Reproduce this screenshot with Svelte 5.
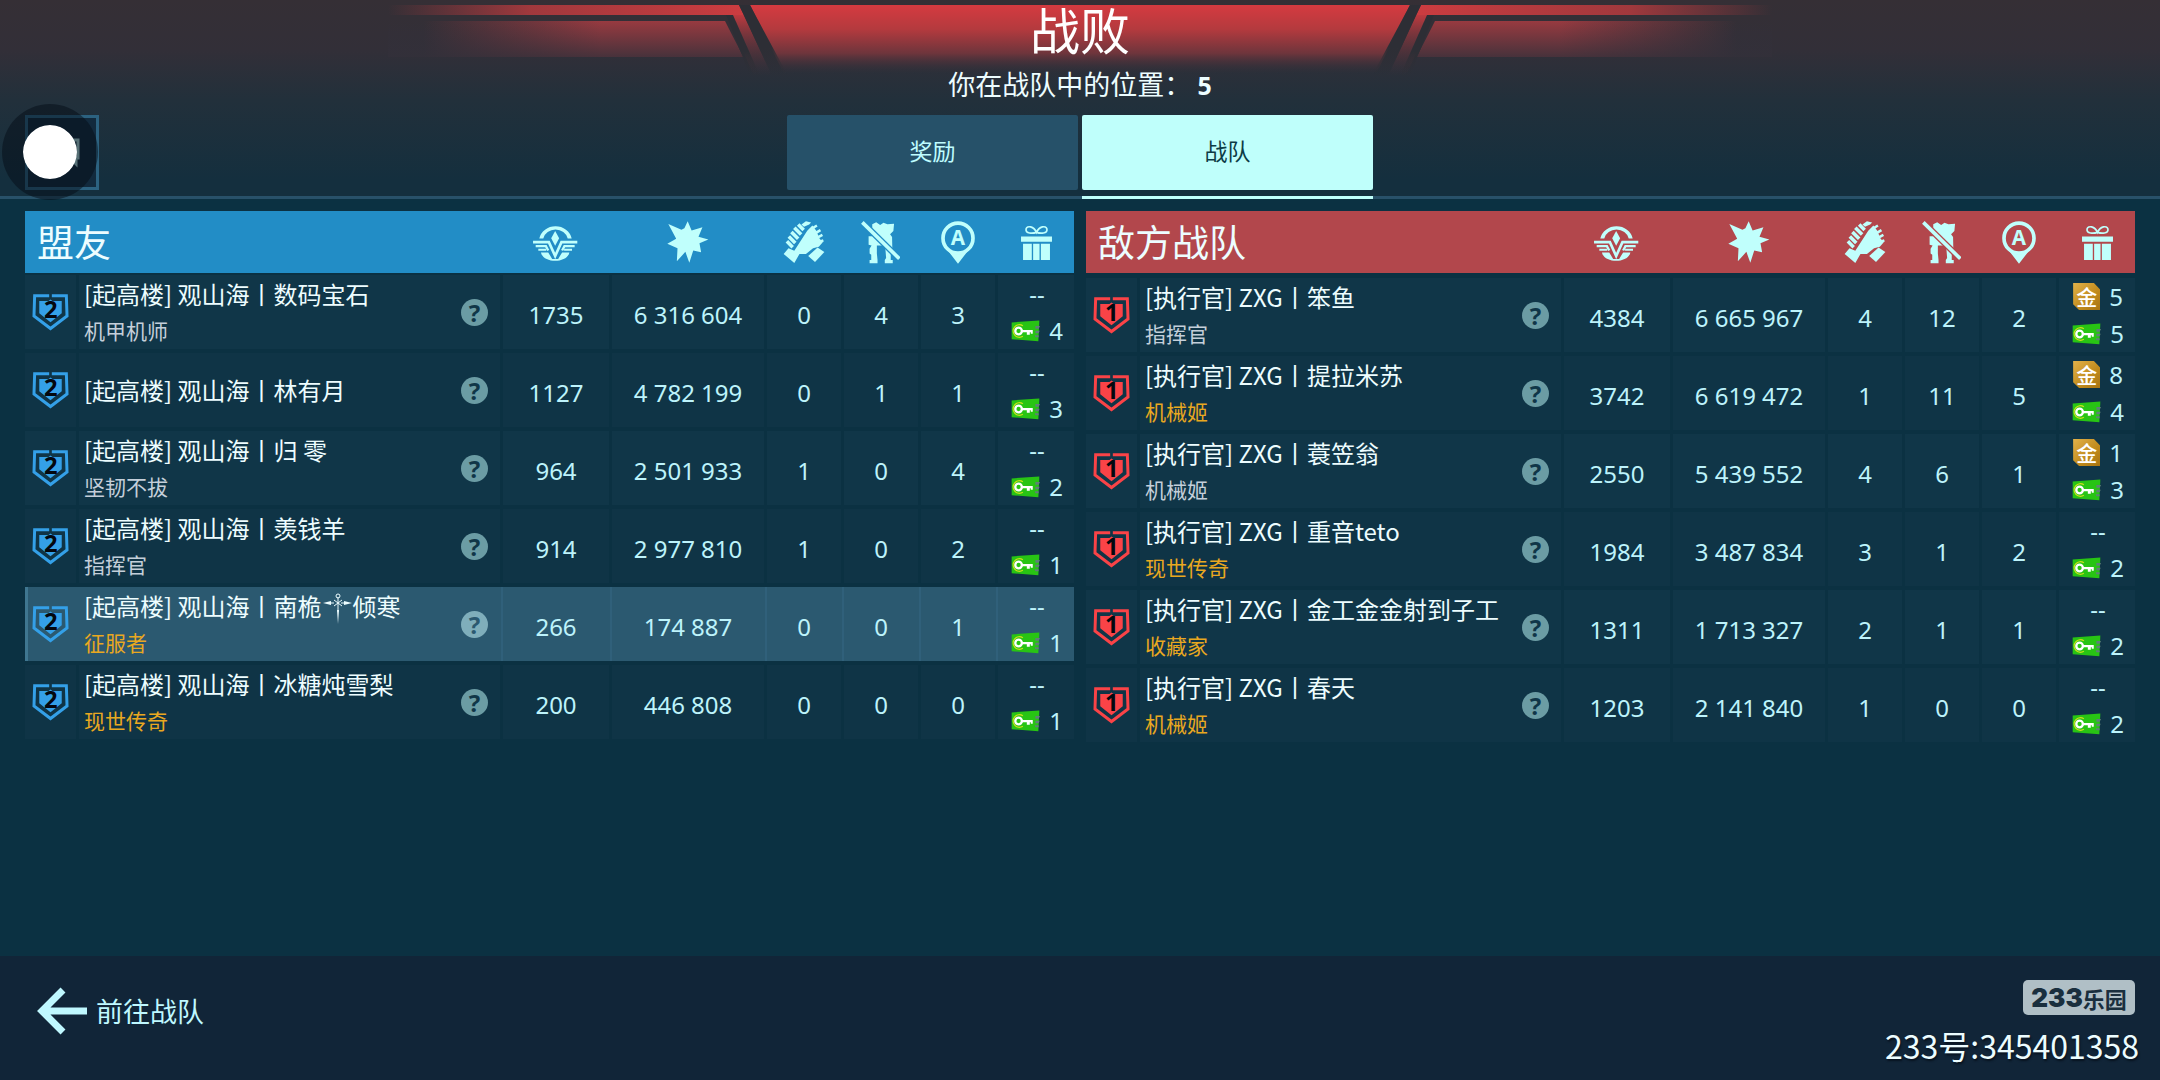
<script>
	let activeTab = 'team';

	const tabs = [
		{ id: 'rewards', label: '奖励' },
		{ id: 'team', label: '战队' }
	];

	const columns = ['rank', 'damage', 'assists', 'mechs', 'beacons', 'rewards'];
	const columnNames = {
		rank: '荣誉',
		damage: '伤害',
		assists: '助攻',
		mechs: '击毁',
		beacons: '信标',
		rewards: '奖励'
	};

	// stats: honor, damage, assists, kills, beacons
	const teams = [
		{
			id: 'ally',
			title: '盟友',
			level: 2,
			players: [
				{ name: '[起高楼] 观山海丨数码宝石', title: '机甲机师', stats: ['1735', '6 316 604', 0, 4, 3], keys: 4 },
				{ name: '[起高楼] 观山海丨林有月', stats: ['1127', '4 782 199', 0, 1, 1], keys: 3 },
				{ name: '[起高楼] 观山海丨归 零', title: '坚韧不拔', stats: ['964', '2 501 933', 1, 0, 4], keys: 2 },
				{ name: '[起高楼] 观山海丨羡钱羊', title: '指挥官', stats: ['914', '2 977 810', 1, 0, 2], keys: 1 },
				{ name: '[起高楼] 观山海丨南桅༒倾寒', title: '征服者', rare: true, me: true, stats: ['266', '174 887', 0, 0, 1], keys: 1 },
				{ name: '[起高楼] 观山海丨冰糖炖雪梨', title: '现世传奇', rare: true, stats: ['200', '446 808', 0, 0, 0], keys: 1 }
			]
		},
		{
			id: 'enemy',
			title: '敌方战队',
			level: 1,
			players: [
				{ name: '[执行官] ZXG丨笨鱼', title: '指挥官', stats: ['4384', '6 665 967', 4, 12, 2], gold: 5, keys: 5 },
				{ name: '[执行官] ZXG丨提拉米苏', title: '机械姬', rare: true, stats: ['3742', '6 619 472', 1, 11, 5], gold: 8, keys: 4 },
				{ name: '[执行官] ZXG丨蓑笠翁', title: '机械姬', stats: ['2550', '5 439 552', 4, 6, 1], gold: 1, keys: 3 },
				{ name: '[执行官] ZXG丨重音teto', title: '现世传奇', rare: true, stats: ['1984', '3 487 834', 3, 1, 2], keys: 2 },
				{ name: '[执行官] ZXG丨金工金金射到子工', title: '收藏家', rare: true, stats: ['1311', '1 713 327', 2, 1, 1], keys: 2 },
				{ name: '[执行官] ZXG丨春天', title: '机械姬', rare: true, stats: ['1203', '2 141 840', 1, 0, 0], keys: 2 }
			]
		}
	];
</script>

{#snippet columnIcon(kind)}
	{#if kind === 'rank'}
		<svg class="icon" viewBox="0 0 136 112" width="45" height="37" aria-hidden="true">
			<path d="M19 44A50 46 0 0 1 117 44H105A38 35 0 0 0 31 44Z" />
			<path d="M67 21L79 43L67 66L55 43Z" />
			<path class="line" d="M0 55H48L67 97L86 55H134" stroke-width="8" />
			<path class="line" d="M8 67H39L46 80M126 67H95L88 80" stroke-width="7" />
			<path class="line" d="M16 78H40M118 78H94" stroke-width="6" />
			<path d="M24 86H46L58 106H76L88 86H110C104 120 30 120 24 86Z" />
		</svg>
	{:else if kind === 'damage'}
		<svg class="icon" viewBox="0 0 126 128" width="42" height="42" aria-hidden="true">
			<path d="M3 9L43 27L52 22L62 1L74 29L107 19L95 48L125 56L98 68L103 95L79 90L67 127L55 94L29 123L31 83L0 69L27 54Z" />
		</svg>
	{:else if kind === 'assists'}
		<svg class="icon" viewBox="0 0 128 130" width="42" height="42" aria-hidden="true">
			<path class="line" d="M46 11L63 28M34 21L55 42M25 34L46 55M17 48L37 68M11 63L29 81" stroke-width="11" />
			<path d="M56 11L70 1L86 5L80 11L64 18Z" />
			<path d="M74 30L90 14L102 30L112 54L122 66L110 80L92 84L70 102L50 102L34 130L1 102L16 84L34 92Z" />
			<path class="line" d="M88 24L104 14M98 38L115 28M104 52L121 43M108 66L124 60" stroke-width="8" />
			<path d="M77 108L106 82L127 96L98 127Z" />
		</svg>
	{:else if kind === 'mechs'}
		<svg class="icon" viewBox="0 0 118 130" width="39" height="43" aria-hidden="true">
			<path d="M34 10L46 4L58 12L68 5L80 10L100 8L98 30L88 40L94 48L95 96L90 100V118H96V128H72V118L76 112L73 74H48V98L50 118V128H26V118H31V102L26 98V84L32 74L23 72V46H34Z" />
			<path class="gap" d="M4 4L116 114" />
			<path class="line" d="M4 4L116 114" stroke-width="11" />
		</svg>
	{:else if kind === 'beacons'}
		<svg class="icon" viewBox="0 0 102 128" width="34" height="43" aria-hidden="true">
			<circle class="line" cx="51" cy="51" r="45" stroke-width="11" />
			<path d="M22 90Q51 108 80 90L51 128Z" />
			<text x="51" y="73" text-anchor="middle">A</text>
		</svg>
	{:else}
		<svg class="icon" viewBox="0 0 92 104" width="31" height="35" aria-hidden="true">
			<path class="line" d="M46 22C38 4 18 0 15 12C13 26 34 26 46 22C58 26 79 26 77 12C74 0 54 4 46 22Z" stroke-width="5" />
			<path d="M0 34H92V50H0ZM6 56H32V104H6ZM36 56H55V104H36ZM59 56H86V104H59Z" />
		</svg>
	{/if}
{/snippet}

{#snippet badge(level)}
	<svg class="badge" viewBox="0 0 112 114" width="37" height="38" role="img" aria-label="等级 {level}">
		<path class="line" d="M52 8H8L6 69L56 107L106 69L104 8H60" stroke-width="9" />
		<path d="M22 24H50L56 19L62 24H90V61L56 88L22 61Z" />
		<text x="57" y="75" text-anchor="middle">{level}</text>
	</svg>
{/snippet}

{#snippet keyCard()}
	<svg class="key" viewBox="0 0 88 66" width="29" height="22" aria-hidden="true">
		<path d="M2 7L86 1L83 64L2 58Z" fill="#28c414" />
		<path d="M74 18H88L84 26H74ZM74 32H87L84 40H74ZM72 46H84V52H74Z" fill="#5f7f78" />
		<path d="M36 17A19 19 0 1 0 36 49" fill="none" stroke="#c8de1e" stroke-width="4" />
		<circle cx="23" cy="33" r="10" fill="none" stroke="#fff" stroke-width="7" />
		<path d="M32 30H66V41H60V37H57V44H48V37H32Z" fill="#fff" />
	</svg>
{/snippet}

<div class="page">
	<header>
		<svg class="banner" viewBox="0 0 1384 80" width="1384" height="80" aria-hidden="true">
			<defs>
				<linearGradient id="center" x1="0" y1="0" x2="0" y2="1">
					<stop offset="0" stop-color="#d53a40" />
					<stop offset="0.35" stop-color="#b43a3e" />
					<stop offset="0.7" stop-color="#6e353c" />
					<stop offset="1" stop-color="#33303a" stop-opacity="0" />
				</linearGradient>
				<linearGradient id="strip" x1="0" y1="0" x2="1" y2="0">
					<stop offset="0" stop-color="#b43a3e" stop-opacity="0" />
					<stop offset="0.4" stop-color="#b43a3e" stop-opacity="0.85" />
					<stop offset="1" stop-color="#cc3c40" />
				</linearGradient>
				<linearGradient id="slash" x1="0" y1="0" x2="0" y2="1">
					<stop offset="0" stop-color="#bd3a3f" />
					<stop offset="1" stop-color="#4a333c" stop-opacity="0" />
				</linearGradient>
				<linearGradient id="panel" x1="0" y1="0" x2="1" y2="0">
					<stop offset="0.1" stop-color="#983a40" stop-opacity="0" />
					<stop offset="0.6" stop-color="#983a40" />
				</linearGradient>
				<linearGradient id="shade" x1="0" y1="0" x2="0" y2="1">
					<stop offset="0" stop-color="#33303a" stop-opacity="0" />
					<stop offset="1" stop-color="#33303a" stop-opacity="0.8" />
				</linearGradient>
				<linearGradient id="edge" x1="0" y1="0" x2="0" y2="1">
					<stop offset="0.6" stop-color="#2d2e35" />
					<stop offset="1" stop-color="#2d2e35" stop-opacity="0" />
				</linearGradient>
				<g id="wing">
					<path d="M0 5H351L356 15H0Z" fill="url(#strip)" />
					<path d="M339 15H356L384 76H366Z" fill="url(#slash)" />
					<path d="M0 21H337L355 57H0Z" fill="url(#panel)" />
					<path d="M0 21H337L355 57H0Z" fill="url(#shade)" />
					<path d="M338 15H345L372 76H362Z" fill="url(#edge)" />
					<path d="M351 5H362L400 76H384Z" fill="url(#edge)" />
				</g>
			</defs>
			<path d="M362 5H1022L988 74H396Z" fill="url(#center)" />
			<use href="#wing" />
			<use href="#wing" transform="translate(1384 0) scale(-1 1)" />
		</svg>
		<h1>战败</h1>
		<p class="position">你在战队中的位置： <b>5</b></p>
		<div class="toolbar">
			<button class="chat" aria-label="聊天">
				<svg viewBox="0 0 36 30" width="36" height="30" aria-hidden="true">
					<path d="M2 2H34V20H32V26L26 20H2Z" />
				</svg>
				<span class="touch"></span>
			</button>
			<nav>
				{#each tabs as tab}
					<button class="tab" class:active={activeTab === tab.id} onclick={() => (activeTab = tab.id)}>
						{tab.label}
					</button>
				{/each}
			</nav>
		</div>
	</header>

	<main>
		{#each teams as team}
			<table class={team.id}>
				<colgroup>
					<col class="c-level" />
					<col />
					<col class="c-rank" />
					<col class="c-damage" />
					<col class="c-small" />
					<col class="c-small" />
					<col class="c-small" />
					<col class="c-reward" />
				</colgroup>
				<thead>
					<tr>
						<th colspan="2" class="team-name">{team.title}</th>
						{#each columns as column}
							<th aria-label={columnNames[column]}>{@render columnIcon(column)}</th>
						{/each}
					</tr>
				</thead>
				<tbody>
					{#each team.players as player}
						<tr class:me={player.me}>
							<td>{@render badge(team.level)}</td>
							<td>
								<div class="player">
									<div class="names">
										<div class="name">
											{#each player.name.split('༒') as part, i}
												{#if i > 0}
													<svg class="ornament" viewBox="0 0 31 32" width="31" height="32" role="img" aria-label="༒">
														<path d="M1 11L9 9V13ZM30 11L22 9V13ZM15 18H17L16 32Z" />
														<path class="line" d="M8 11H12M19 11H23M16 5V20M12 8L20 14M20 8L12 14" stroke-width="1" />
														<circle class="line" cx="16" cy="4" r="2" stroke-width="1" />
													</svg>
												{/if}{part}
											{/each}
										</div>
										{#if player.title}
											<div class="title" class:rare={player.rare}>{player.title}</div>
										{/if}
									</div>
									<button class="help" aria-label="玩家信息">?</button>
								</div>
							</td>
							{#each player.stats as stat}
								<td class="stat">{stat}</td>
							{/each}
							<td class="reward">
								{#if player.gold}
									<div><span class="gold">金</span><span class="count">{player.gold}</span></div>
								{:else}
									<div class="none">--</div>
								{/if}
								<div>{@render keyCard()}<span class="count">{player.keys}</span></div>
							</td>
						</tr>
					{/each}
				</tbody>
			</table>
		{/each}
	</main>

	<footer>
		<a class="back" href="#team">
			<svg viewBox="0 0 50 48" width="50" height="48" aria-hidden="true">
				<path d="M26 3L5 24L26 45M5 24H50" />
			</svg>
			前往战队
		</a>
		<div class="account">
			<div class="brand"><b>233</b>乐园</div>
			<div class="uid">233号:345401358</div>
		</div>
	</footer>
</div>

<style>
	:global(body) {
		margin: 0;
		background: #0b3142;
	}

	.page {
		display: flex;
		flex-direction: column;
		min-height: 100vh;
		font-family: 'Noto Sans CJK SC', sans-serif;
		color: #edfdff;
		background: #0b3142;
	}

	button {
		font-family: inherit;
		border: 0;
		padding: 0;
		cursor: pointer;
	}

	header {
		position: relative;
		border-bottom: 3px solid #285169;
		background: linear-gradient(#352f35 0, #322f38 50px, #22303b 100px, #142f3e 180px);
		text-align: center;
	}

	.banner {
		position: absolute;
		top: 0;
		left: 50%;
		transform: translateX(-50%);
	}

	h1 {
		position: relative;
		margin: 0 0 6px;
		font-size: 50px;
		font-weight: 400;
		line-height: 56px;
		color: #fff;
	}

	.position {
		position: relative;
		margin: 0;
		font-size: 27px;
		line-height: 44px;
	}

	.position b {
		font-family: 'Noto Sans', sans-serif;
		font-size: 25px;
		line-height: 1;
	}

	.toolbar {
		display: grid;
		grid-template-columns: 1fr auto 1fr;
		padding: 9px 25px 6px;
	}

	.chat {
		position: relative;
		display: grid;
		place-items: center;
		width: 74px;
		height: 75px;
		border: 3px solid #2c6280;
		background: #122a3d;
	}

	.chat path {
		fill: none;
		stroke: #a9d2d4;
		stroke-width: 3;
	}

	/* touch indicator lies over the chat button */
	.touch {
		position: absolute;
		top: -14px;
		left: -26px;
		box-sizing: border-box;
		width: 96px;
		height: 96px;
		border: 21px solid rgba(4, 12, 22, 0.5);
		border-radius: 50%;
		background: #fff;
		background-clip: padding-box;
	}

	nav {
		display: flex;
		gap: 4px;
	}

	.tab {
		position: relative;
		width: 291px;
		height: 75px;
		padding-bottom: 6px;
		border-radius: 2px;
		font-size: 23px;
		color: #bffcff;
		background: #265169;
	}

	.tab.active {
		color: #0d3b45;
		background: #bffffb;
	}

	.tab.active::after {
		content: '';
		position: absolute;
		left: 0;
		right: 0;
		bottom: -9px;
		height: 3px;
		background: #bffffb;
	}

	main {
		flex: 1;
		display: grid;
		grid-template-columns: 1fr 1fr;
		align-items: start;
		gap: 12px;
		padding: 12px 25px;
	}

	table {
		width: 100%;
		table-layout: fixed;
		border-collapse: separate;
		border-spacing: 0;
	}

	.ally {
		--team: #228dc6;
		--badge: #34a0e8;
		--head-gap: 2px;
	}

	.enemy {
		--team: #b2474c;
		--badge: #fa4347;
		--head-gap: 5px;
	}

	.c-level {
		width: 54px;
	}

	.c-rank {
		width: 109px;
	}

	.c-damage {
		width: 155px;
	}

	.c-small {
		width: 77px;
	}

	.c-reward {
		width: 76px;
	}

	th,
	td {
		box-sizing: border-box;
		padding: 0;
		background-clip: padding-box;
	}

	th {
		height: 64px;
		padding-right: 4px;
		border-bottom: var(--head-gap) solid transparent;
		background-color: var(--team);
		vertical-align: middle;
	}

	th:last-child {
		padding-right: 0;
	}

	.enemy th {
		height: 67px;
	}

	.team-name {
		padding: 0 0 3px 12px;
		font-size: 37px;
		font-weight: 400;
		line-height: 56px;
		text-align: left;
	}

	svg {
		display: block;
	}

	.icon {
		margin: 0 auto;
		fill: #c0fffc;
		stroke: none;
	}

	.icon .line {
		fill: none;
		stroke: #c0fffc;
	}

	.icon .gap {
		stroke: var(--team);
		stroke-width: 19;
	}

	.icon text {
		font: 700 62px 'Noto Sans', sans-serif;
	}

	td {
		height: 78px;
		border-right: 3px solid transparent;
		border-bottom: 4px solid transparent;
		background-color: #103648;
	}

	tr:nth-child(even) td {
		background-color: #0f3446;
	}

	td:last-child {
		border-right: 0;
	}

	tr.me td {
		padding-right: 3px;
		border-right: 0;
		background-color: #2b5970;
		box-shadow: inset -2px 0 #30607a;
	}

	tr.me td:first-child {
		box-shadow: inset 3px 0 #3f7690;
	}

	tr.me td:last-child {
		padding-right: 0;
		box-shadow: none;
	}

	.badge {
		margin: 0 auto;
		fill: var(--badge);
	}

	.badge .line {
		fill: none;
		stroke: var(--badge);
	}

	.badge text {
		font: 700 72px 'Noto Sans', sans-serif;
		fill: #04080f;
	}

	.player {
		display: flex;
		align-items: center;
		justify-content: space-between;
		padding: 0 12px 0 5px;
	}

	.name {
		font-size: 24px;
		line-height: 36px;
		white-space: nowrap;
	}

	.ornament {
		display: inline-block;
		vertical-align: -8px;
		fill: #edfdff;
	}

	.ornament .line {
		fill: none;
		stroke: #edfdff;
	}

	.title {
		font-size: 21px;
		line-height: 36px;
		color: #c4cfda;
	}

	.title.rare {
		color: #e9a820;
	}

	.help {
		width: 27px;
		height: 27px;
		border-radius: 50%;
		font: 700 24px/27px 'Noto Sans', sans-serif;
		color: #103648;
		background: #6b9ca4;
	}

	.me .help {
		color: #2b5970;
		background: #7faebb;
	}

	.stat {
		padding-top: 4px;
		font-family: 'Noto Sans', sans-serif;
		font-size: 24px;
		text-align: center;
		color: #bdf3fb;
	}

	.reward {
		font-family: 'Noto Sans', sans-serif;
		font-size: 24px;
		line-height: 37px;
		color: #bdf3fb;
	}

	.reward div {
		display: flex;
		align-items: center;
		justify-content: center;
		gap: 9px;
		height: 37px;
		padding-left: 2px;
	}

	.gold {
		width: 27px;
		height: 27px;
		font: 500 21px/26px 'Noto Sans CJK SC', sans-serif;
		text-align: center;
		color: #fff;
		background: linear-gradient(135deg, #e3b24a, #c08a1c 60%, #a87412);
		clip-path: polygon(0 0, 77% 0, 100% 24%, 100% 100%, 22% 100%, 0 79%);
	}

	footer {
		display: flex;
		align-items: center;
		justify-content: space-between;
		box-sizing: border-box;
		height: 124px;
		padding: 0 21px 0 37px;
		background: #112538;
	}

	.back {
		display: flex;
		align-items: center;
		gap: 9px;
		padding-bottom: 14px;
		font-size: 27px;
		line-height: 48px;
		color: #bff8ff;
		text-decoration: none;
	}

	.back path {
		fill: none;
		stroke: #bff8ff;
		stroke-width: 7;
	}

	.account {
		display: flex;
		flex-direction: column;
		align-items: flex-end;
		gap: 8px;
		padding-top: 11px;
	}

	.brand {
		display: flex;
		align-items: center;
		justify-content: center;
		width: 112px;
		height: 35px;
		margin-right: 4px;
		border-radius: 5px;
		font-size: 22px;
		font-weight: 700;
		color: #1a2f3e;
		background: #b0bfc6;
	}

	.brand b {
		font-family: Inter, sans-serif;
		font-size: 26px;
		font-weight: 900;
	}

	.uid {
		font-size: 32px;
		line-height: 44px;
		text-shadow: 1px 2px 2px #08131f;
	}
</style>
